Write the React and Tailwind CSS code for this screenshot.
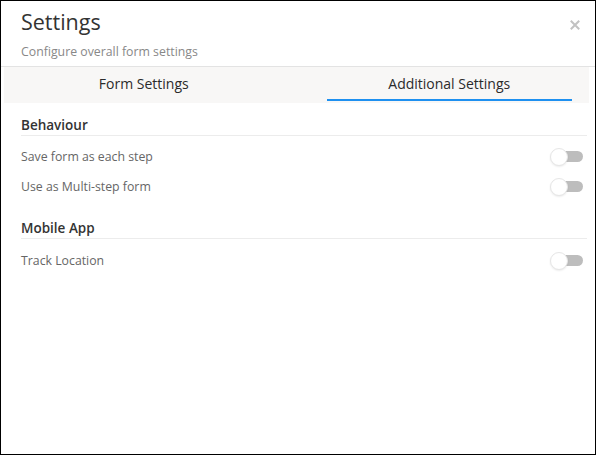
import React, { useState } from 'react';

const font = { fontFamily: '"Open Sans", "Noto Sans", sans-serif' };

// Small pill switch: white knob on the left over a grey track when off
const Toggle = ({ on, onChange }) => (
  <button
    type="button"
    onClick={() => onChange(!on)}
    className="relative w-[33px] h-[18px] shrink-0"
  >
    <span
      className={`absolute left-[5px] right-0 top-[3px] h-[11px] rounded-full ${
        on ? 'bg-[#2196f3]' : 'bg-[#bdbdbd]'
      }`}
    />
    <span
      className={`absolute top-0 h-[18px] w-[18px] rounded-full bg-white border border-[#e6e6e6] shadow-[0_1px_2px_rgba(0,0,0,0.08)] ${
        on ? 'left-[15px]' : 'left-0'
      }`}
    />
  </button>
);

const Row = ({ label, on, onChange }) => (
  <div className="flex items-center justify-between h-[30px] pr-[4px]">
    <span className="text-[12.3px] text-[#666]">{label}</span>
    <Toggle on={on} onChange={onChange} />
  </div>
);

const Section = ({ title, children }) => (
  <div>
    <div className="text-[13.5px] leading-[20px] font-semibold text-[#333] border-b border-[#ececec]">
      {title}
    </div>
    <div className="pt-[6px]">{children}</div>
  </div>
);

export default function App() {
  const [tab, setTab] = useState('additional');
  const [opts, setOpts] = useState({ saveStep: false, multiStep: false, track: false });
  const set = (key) => (v) => setOpts({ ...opts, [key]: v });

  return (
    <div style={font} className="w-[596px] h-[455px] border border-black bg-white flex flex-col">
      {/* header */}
      <div className="relative px-[20px] pt-[6px] pb-[5px] border-b border-[#e3e3e3]">
        <h1 className="text-[21.5px] text-[#333] leading-[30px]">Settings</h1>
        <p className="text-[12.3px] text-[#888] leading-[18px] mt-[6px]">Configure overall form settings</p>
        <button className="absolute right-[15px] top-[19px] text-[#c2c2c2]">
          <svg width="10" height="10" viewBox="0 0 10 10" stroke="currentColor" strokeWidth="2" strokeLinecap="square">
            <path d="M1.5 1.5 8.5 8.5M8.5 1.5 1.5 8.5" />
          </svg>
        </button>
      </div>

      {/* tabs */}
      <div className="flex gap-[60px] px-[17px] ml-[3px] mr-[6px] bg-[#f8f7f6] h-[36px]">
        {[
          ['form', 'Form Settings'],
          ['additional', 'Additional Settings'],
        ].map(([key, label]) => (
          <button
            key={key}
            onClick={() => setTab(key)}
            className={`w-[246px] h-[34px] text-[14px] font-medium text-[#2b2b2b] border-b-2 ${
              tab === key ? 'border-[#1e90f0]' : 'border-transparent'
            }`}
          >
            {label}
          </button>
        ))}
      </div>

      {/* body */}
      <div className="pl-[20px] pr-[8px] pt-[12px] flex flex-col gap-[16px]">
        <Section title="Behaviour">
          <Row label="Save form as each step" on={opts.saveStep} onChange={set('saveStep')} />
          <Row label="Use as Multi-step form" on={opts.multiStep} onChange={set('multiStep')} />
        </Section>
        <Section title="Mobile App">
          <div className="pt-px">
            <Row label="Track Location" on={opts.track} onChange={set('track')} />
          </div>
        </Section>
      </div>
    </div>
  );
}
